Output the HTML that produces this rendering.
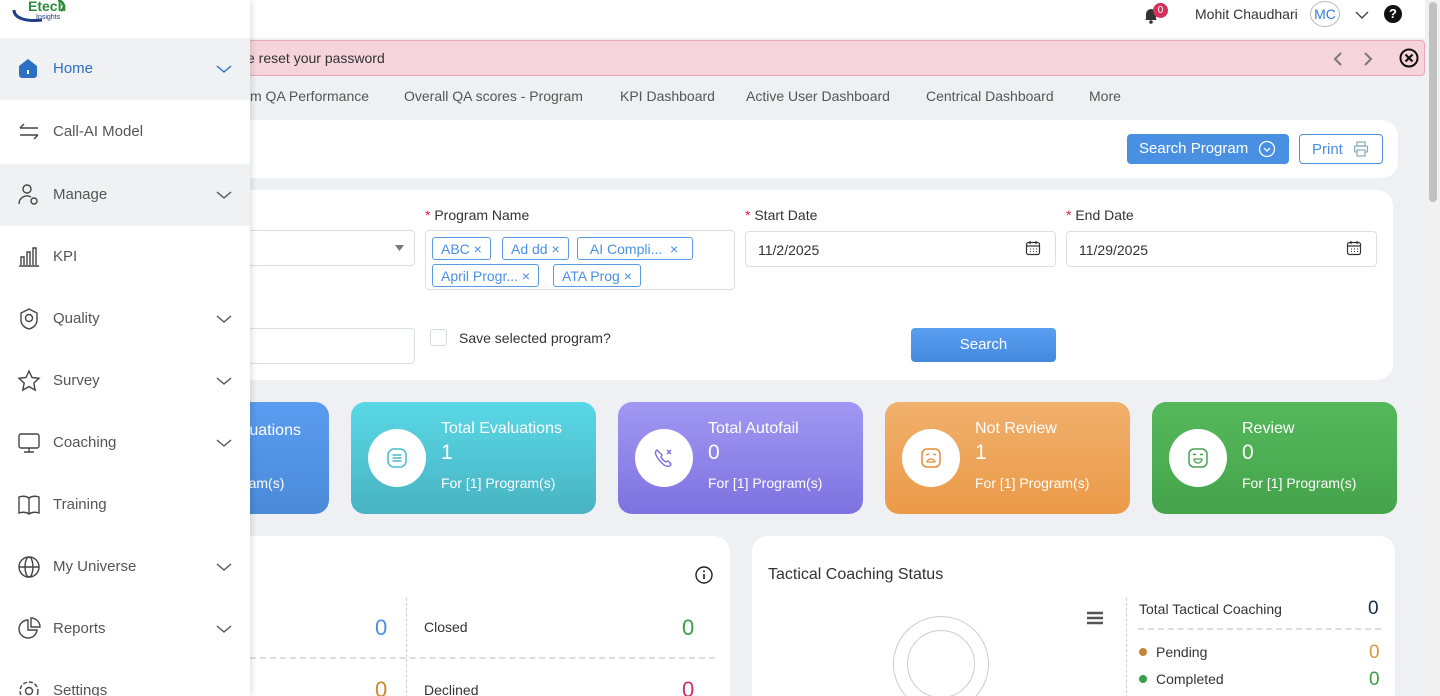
<!DOCTYPE html>
<html><head><meta charset="utf-8"><style>
*{box-sizing:border-box;margin:0;padding:0}
html,body{width:1440px;height:696px;overflow:hidden}
body{background:#eef0f3;font-family:"Liberation Sans",sans-serif;color:#333;position:relative}
.abs{position:absolute}
.top{left:0;top:0;width:1425px;height:38px;background:#fff}
.alert{left:240px;top:40px;width:1185px;height:36px;background:#f6d4db;border:1px solid #e9a9b6;border-radius:4px;font-size:14px;color:#333}
.tabs span{position:absolute;top:88px;font-size:14px;color:#555}
.card{background:#fff;border-radius:16px}
.lbl{font-size:14px;color:#333}
.lbl b{color:#d9263b;font-weight:normal}
.inp{border:1px solid #dcdfe4;border-radius:4px;background:#fff;font-size:14px;color:#333}
.tag{position:absolute;height:23px;border:1px solid #5a9be6;border-radius:3px;color:#4a90e2;font-size:14px;padding:3px 8px;white-space:nowrap}
.kpi{position:absolute;top:402px;width:245px;height:112px;border-radius:14px;color:#fff;white-space:nowrap}
.kpi .c{position:absolute;left:17px;top:27px;width:58px;height:58px;border-radius:50%;background:#fff}
.kpi .t{position:absolute;left:90px;top:18px;font-size:16px}
.kpi .n{position:absolute;left:90px;top:39px;font-size:21px}
.kpi .f{position:absolute;left:90px;top:73px;font-size:14px}
.side{left:0;top:0;width:250px;height:696px;background:#fff;box-shadow:2px 0 6px rgba(0,0,0,.12)}
.it{position:absolute;left:0;width:250px;height:62px;font-size:15px;color:#555}
.it .tx{position:absolute;left:53px;top:22px}
.it svg.ic{position:absolute;left:17px;top:19px}
.it .ch{position:absolute;left:216px;top:26px}
</style></head><body>
<div class="abs top"></div>
<svg class="abs" style="left:1143px;top:6px" width="16" height="18" viewBox="0 0 16 18"><path d="M3 13V8a5 5 0 0 1 10 0v5l1 1H2z" fill="#333"/><circle cx="8" cy="16" r="1.8" fill="#333"/></svg>
<div class="abs" style="left:1153px;top:3px;width:15px;height:15px;border-radius:50%;background:#d2315a;color:#fff;font-size:10px;text-align:center;line-height:15px">0</div>
<div class="abs" style="left:1195px;top:6px;font-size:14px;color:#333">Mohit Chaudhari</div>
<div class="abs" style="left:1310px;top:1px;width:30px;height:26px;border:1px solid #bbb;border-radius:50%;color:#3a7bd5;font-size:14px;text-align:center;line-height:24px">MC</div>
<svg class="abs" style="left:1355px;top:10px" width="14" height="10"><path d="M1 2l6 6 6-6" fill="none" stroke="#444" stroke-width="1.4"/></svg>
<div class="abs" style="left:1384px;top:5px;width:18px;height:18px;border-radius:50%;background:#111;color:#fff;font-size:13px;font-weight:bold;text-align:center;line-height:18px">?</div>

<div class="abs alert"><span style="position:absolute;left:6px;top:9px">e reset your password</span>
<svg style="position:absolute;left:1092px;top:11px" width="10" height="14"><path d="M8 1L2 7l6 6" fill="none" stroke="#777" stroke-width="2"/></svg>
<svg style="position:absolute;left:1122px;top:11px" width="10" height="14"><path d="M2 1l6 6-6 6" fill="none" stroke="#777" stroke-width="2"/></svg>
<svg style="position:absolute;left:1158px;top:7px" width="20" height="20"><circle cx="10" cy="10" r="8.5" fill="none" stroke="#111" stroke-width="2"/><path d="M6.5 6.5l7 7M13.5 6.5l-7 7" stroke="#111" stroke-width="2.2"/></svg>
</div>
<div class="tabs"><span style="left:250px">m QA Performance</span><span style="left:404px">Overall QA scores - Program</span><span style="left:620px">KPI Dashboard</span><span style="left:746px">Active User Dashboard</span><span style="left:926px">Centrical Dashboard</span><span style="left:1089px">More</span></div>

<div class="abs card" style="left:230px;top:120px;width:1168px;height:58px"></div>
<div class="abs" style="left:1127px;top:134px;width:162px;height:30px;background:#4a90e2;border-radius:4px;color:#fff;font-size:15px;padding:6px 0 0 12px">Search Program<svg style="position:absolute;left:131px;top:6px" width="18" height="18"><circle cx="9" cy="9" r="7.5" fill="none" stroke="#fff" stroke-width="1.3"/><path d="M6 8l3 3 3-3" fill="none" stroke="#fff" stroke-width="1.3"/></svg></div>
<div class="abs" style="left:1299px;top:134px;width:84px;height:30px;border:1px solid #4a90e2;border-radius:4px;color:#4a90e2;font-size:15px;padding:6px 0 0 12px;background:#fff">Print<svg style="position:absolute;left:53px;top:6px" width="16" height="16"><rect x="4" y="1" width="8" height="4" fill="none" stroke="#8ab" stroke-width="1.2"/><rect x="1.5" y="5" width="13" height="6" rx="1" fill="none" stroke="#8ab" stroke-width="1.2"/><rect x="4" y="9" width="8" height="6" fill="#fff" stroke="#8ab" stroke-width="1.2"/></svg></div>

<div class="abs card" style="left:230px;top:190px;width:1163px;height:190px"></div>
<div class="abs inp" style="left:240px;top:230px;width:175px;height:36px"><svg style="position:absolute;left:154px;top:14px" width="9" height="6"><path d="M0 0h9L4.5 6z" fill="#777"/></svg></div>
<div class="abs lbl" style="left:425px;top:207px"><b>*</b> Program Name</div>
<div class="abs inp" style="left:425px;top:230px;width:310px;height:60px"></div>
<div class="tag" style="left:432px;top:237px">ABC ×</div>
<div class="tag" style="left:502px;top:237px">Ad dd ×</div>
<div class="tag" style="left:577px;top:237px;width:116px">&nbsp;AI Compli... &nbsp;×</div>
<div class="tag" style="left:432px;top:264px">April Progr... ×</div>
<div class="tag" style="left:553px;top:264px">ATA Prog ×</div>
<div class="abs lbl" style="left:745px;top:207px"><b>*</b> Start Date</div>
<div class="abs inp" style="left:745px;top:231px;width:311px;height:36px;padding:10px 12px">11/2/2025<svg style="position:absolute;left:279px;top:8px" width="16" height="16"><rect x="1.5" y="2.5" width="13" height="12" rx="2" fill="none" stroke="#333" stroke-width="1.2"/><path d="M5 1v3M11 1v3M1.5 6h13" stroke="#333" stroke-width="1.2"/><path d="M5 9h1M8 9h1M11 9h1M5 11.5h1M8 11.5h1M11 11.5h1" stroke="#333"/></svg></div>
<div class="abs lbl" style="left:1066px;top:207px"><b>*</b> End Date</div>
<div class="abs inp" style="left:1066px;top:231px;width:311px;height:36px;padding:10px 12px">11/29/2025<svg style="position:absolute;left:279px;top:8px" width="16" height="16"><rect x="1.5" y="2.5" width="13" height="12" rx="2" fill="none" stroke="#333" stroke-width="1.2"/><path d="M5 1v3M11 1v3M1.5 6h13" stroke="#333" stroke-width="1.2"/><path d="M5 9h1M8 9h1M11 9h1M5 11.5h1M8 11.5h1M11 11.5h1" stroke="#333"/></svg></div>
<div class="abs inp" style="left:240px;top:328px;width:175px;height:36px"></div>
<div class="abs" style="left:430px;top:329px;width:17px;height:17px;border:1px solid #d5d8dd;border-radius:3px"></div>
<div class="abs lbl" style="left:459px;top:330px">Save selected program?</div>
<div class="abs" style="left:911px;top:328px;width:145px;height:34px;background:linear-gradient(#5a9ff0,#4489de);border-radius:4px;color:#fff;font-size:15px;text-align:center;line-height:34px">Search</div>

<div class="kpi" style="left:84px;background:linear-gradient(#5b9cf0,#4a8ad8)"><div class="t" style="left:96px;top:20px">Total Evaluations</div><div class="f" style="left:86px">For [1] Program(s)</div></div>
<div class="kpi" style="left:351px;background:linear-gradient(#5ad8e6,#48b3c2)"><div class="c"><svg style="position:absolute;left:18px;top:18px" width="22" height="22"><rect x="2" y="2" width="18" height="18" rx="6" fill="none" stroke="#4bbccb" stroke-width="1.5"/><path d="M6.5 8h9M6.5 11h9M6.5 14h9" stroke="#4bbccb" stroke-width="1.5"/></svg></div><div class="t">Total Evaluations</div><div class="n">1</div><div class="f">For [1] Program(s)</div></div>
<div class="kpi" style="left:618px;background:linear-gradient(#a198f2,#7d72e0)"><div class="c"><svg style="position:absolute;left:17px;top:17px" width="24" height="24"><path d="M5 4c-2 1-2 4 0 7s6 8 9 9 4 0 5-2l-3-3-2 1c-2-1-4-3-5-5l1-2-3-3z" fill="none" stroke="#7b6fd8" stroke-width="1.4"/><path d="M15 4l4 4M19 4l-4 4" stroke="#7b6fd8" stroke-width="1.4"/></svg></div><div class="t">Total Autofail</div><div class="n">0</div><div class="f">For [1] Program(s)</div></div>
<div class="kpi" style="left:885px;background:linear-gradient(#f0b06c,#eb9a48)"><div class="c"><svg style="position:absolute;left:18px;top:18px" width="22" height="22"><rect x="2" y="2" width="18" height="18" rx="5" fill="none" stroke="#e58c37" stroke-width="1.5"/><path d="M6 8l3-1M16 8l-3-1" stroke="#e58c37" stroke-width="1.3"/><path d="M7 15a4 3 0 0 1 8 0z" fill="none" stroke="#e58c37" stroke-width="1.3"/></svg></div><div class="t">Not Review</div><div class="n">1</div><div class="f">For [1] Program(s)</div></div>
<div class="kpi" style="left:1152px;background:linear-gradient(#55b95b,#45a34b)"><div class="c"><svg style="position:absolute;left:18px;top:18px" width="22" height="22"><rect x="2" y="2" width="18" height="18" rx="5" fill="none" stroke="#4aa050" stroke-width="1.5"/><path d="M6 8q1.5-1.5 3 0M13 8q1.5-1.5 3 0" fill="none" stroke="#4aa050" stroke-width="1.3"/><path d="M7 12h8a4 4 0 0 1-8 0z" fill="none" stroke="#4aa050" stroke-width="1.3"/></svg></div><div class="t">Review</div><div class="n">0</div><div class="f">For [1] Program(s)</div></div>

<div class="abs card" style="left:230px;top:536px;width:500px;height:180px"></div>
<svg class="abs" style="left:694px;top:565px" width="20" height="20"><circle cx="10" cy="10" r="8" fill="none" stroke="#222" stroke-width="1.4"/><path d="M10 9v5" stroke="#222" stroke-width="1.6"/><circle cx="10" cy="6.3" r="1" fill="#222"/></svg>
<div class="abs" style="left:406px;top:598px;height:100px;border-left:1px dashed #ccc"></div>
<div class="abs" style="left:250px;top:657px;width:465px;border-top:2px dashed #ddd"></div>
<div class="abs" style="left:375px;top:615px;font-size:22px;color:#4a90e2">0</div>
<div class="abs lbl" style="left:424px;top:619px">Closed</div>
<div class="abs" style="left:682px;top:615px;font-size:22px;color:#3aa047">0</div>
<div class="abs" style="left:375px;top:677px;font-size:22px;color:#c98a2e">0</div>
<div class="abs lbl" style="left:424px;top:682px">Declined</div>
<div class="abs" style="left:682px;top:677px;font-size:22px;color:#d0306a">0</div>

<div class="abs card" style="left:752px;top:536px;width:643px;height:180px"></div>
<div class="abs" style="left:768px;top:566px;font-size:16px;color:#333">Tactical Coaching Status</div>
<div class="abs" style="left:893px;top:616px;width:96px;height:96px;border:1px solid #ccc;border-radius:50%"></div>
<div class="abs" style="left:907px;top:630px;width:68px;height:68px;border:1px solid #ccc;border-radius:50%"></div>
<svg class="abs" style="left:1087px;top:611px" width="16" height="14"><path d="M0 2h16M0 7h16M0 12h16" stroke="#555" stroke-width="2.4"/></svg>
<div class="abs" style="left:1126px;top:598px;height:100px;border-left:1px dashed #ccc"></div>
<div class="abs lbl" style="left:1139px;top:601px">Total Tactical Coaching</div>
<div class="abs" style="left:1368px;top:598px;font-size:19px;color:#1a2a44">0</div>
<div class="abs" style="left:1138px;top:628px;width:243px;border-top:2px dashed #ddd"></div>
<div class="abs" style="left:1139px;top:648px;width:8px;height:8px;border-radius:50%;background:#c5843a"></div>
<div class="abs lbl" style="left:1156px;top:644px">Pending</div>
<div class="abs" style="left:1369px;top:642px;font-size:19px;color:#d49a3a">0</div>
<div class="abs" style="left:1139px;top:675px;width:8px;height:8px;border-radius:50%;background:#3aa047"></div>
<div class="abs lbl" style="left:1156px;top:671px">Completed</div>
<div class="abs" style="left:1369px;top:669px;font-size:19px;color:#3aa047">0</div>

<div class="abs" style="left:1425px;top:0;width:15px;height:696px;background:#f1f1f1"></div>
<div class="abs" style="left:1429px;top:2px;width:8px;height:200px;background:#c1c1c1;border-radius:4px"></div>

<div class="abs side">
<svg style="position:absolute;left:12px;top:0" width="60" height="26"><path d="M2 10c0 8 12 12 28 10" fill="none" stroke="#1f3c88" stroke-width="3"/><path d="M46 0c6 2 8 7 3 11" fill="none" stroke="#2e8b3a" stroke-width="2.5"/><text x="16" y="11" font-family="Liberation Sans" font-weight="bold" font-size="14" fill="#2e8b3a">Etech</text><text x="24" y="19" font-family="Liberation Sans" font-size="7" fill="#1f3c88">Insights</text></svg>
<div class="it" style="top:38px;background:#f0f1f3"><svg class="ic" width="22" height="22"><path d="M2 9l9-7 9 7v9a3 3 0 0 1-3 3H5a3 3 0 0 1-3-3z" fill="#2c6fc4"/><rect x="10" y="13" width="2" height="4" fill="#fff"/></svg><span class="tx" style="color:#2c6fc4">Home</span><svg class="ch" width="16" height="10"><path d="M1 2l7 6 7-6" fill="none" stroke="#2c6fc4" stroke-width="1.4"/></svg></div>
<div class="it" style="top:101px"><svg class="ic" width="24" height="24"><path d="M3 8h18M3 8l4-4M21 15H3M21 15l-4 4" fill="none" stroke="#444" stroke-width="1.4"/></svg><span class="tx">Call-AI Model</span></div>
<div class="it" style="top:164px;background:#f0f1f3"><svg class="ic" width="24" height="24"><circle cx="10" cy="6" r="4" fill="none" stroke="#444" stroke-width="1.4"/><path d="M2 21a8 8 0 0 1 12-7" fill="none" stroke="#444" stroke-width="1.4"/><circle cx="17" cy="18" r="3" fill="none" stroke="#444" stroke-width="1.4"/></svg><span class="tx">Manage</span><svg class="ch" width="16" height="10"><path d="M1 2l7 6 7-6" fill="none" stroke="#555" stroke-width="1.4"/></svg></div>
<div class="it" style="top:226px"><svg class="ic" width="24" height="24"><path d="M2 21h20M4 20v-8h3v8M10 20V7h3v13M16 20V3h3v17" fill="none" stroke="#444" stroke-width="1.4"/></svg><span class="tx">KPI</span></div>
<div class="it" style="top:288px"><svg class="ic" width="24" height="24"><path d="M12 2l8 4v7c0 5-4 8-8 9-4-1-8-4-8-9V6z" fill="none" stroke="#444" stroke-width="1.4"/><circle cx="12" cy="11" r="3.5" fill="none" stroke="#444" stroke-width="1.4"/></svg><span class="tx">Quality</span><svg class="ch" width="16" height="10"><path d="M1 2l7 6 7-6" fill="none" stroke="#555" stroke-width="1.4"/></svg></div>
<div class="it" style="top:350px"><svg class="ic" width="24" height="24"><path d="M12 2l3 6.5 7 .8-5.2 4.8 1.4 7L12 17.6 5.8 21.1l1.4-7L2 9.3l7-.8z" fill="none" stroke="#444" stroke-width="1.4"/></svg><span class="tx">Survey</span><svg class="ch" width="16" height="10"><path d="M1 2l7 6 7-6" fill="none" stroke="#555" stroke-width="1.4"/></svg></div>
<div class="it" style="top:412px"><svg class="ic" width="24" height="24"><rect x="2" y="3" width="20" height="14" rx="2" fill="none" stroke="#444" stroke-width="1.4"/><path d="M12 17v4M7 21h10" stroke="#444" stroke-width="1.4"/></svg><span class="tx">Coaching</span><svg class="ch" width="16" height="10"><path d="M1 2l7 6 7-6" fill="none" stroke="#555" stroke-width="1.4"/></svg></div>
<div class="it" style="top:474px"><svg class="ic" width="24" height="24"><path d="M12 5C9 3 5 3 2 4v16c3-1 7-1 10 1 3-2 7-2 10-1V4c-3-1-7-1-10 1zM12 5v16" fill="none" stroke="#444" stroke-width="1.4"/></svg><span class="tx">Training</span></div>
<div class="it" style="top:536px"><svg class="ic" width="24" height="24"><circle cx="12" cy="12" r="10" fill="none" stroke="#444" stroke-width="1.4"/><ellipse cx="12" cy="12" rx="4" ry="10" fill="none" stroke="#444" stroke-width="1.4"/><path d="M2 12h20" stroke="#444" stroke-width="1.4"/></svg><span class="tx">My Universe</span><svg class="ch" width="16" height="10"><path d="M1 2l7 6 7-6" fill="none" stroke="#555" stroke-width="1.4"/></svg></div>
<div class="it" style="top:598px"><svg class="ic" width="24" height="24"><path d="M11 3a9 9 0 1 0 9 10h-9z" fill="none" stroke="#444" stroke-width="1.4"/><path d="M14 1v9h9a9 9 0 0 0-9-9z" fill="none" stroke="#444" stroke-width="1.4"/></svg><span class="tx">Reports</span><svg class="ch" width="16" height="10"><path d="M1 2l7 6 7-6" fill="none" stroke="#555" stroke-width="1.4"/></svg></div>
<div class="it" style="top:660px"><svg class="ic" width="24" height="24"><circle cx="12" cy="12" r="3.5" fill="none" stroke="#444" stroke-width="1.4"/><circle cx="12" cy="12" r="9" fill="none" stroke="#444" stroke-width="1.4" stroke-dasharray="4 2"/></svg><span class="tx">Settings</span></div>
</div>
</body></html>
